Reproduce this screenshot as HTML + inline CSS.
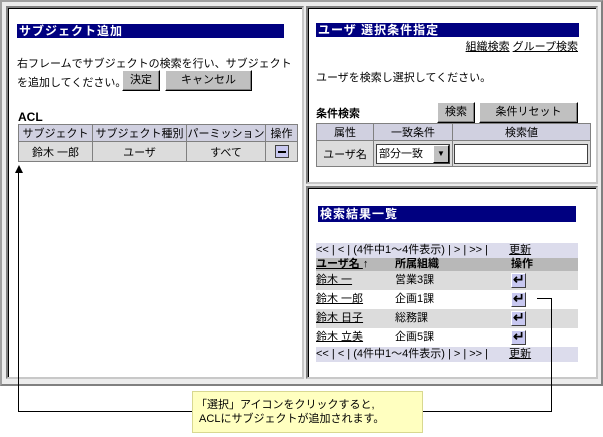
<!DOCTYPE html><html><head><meta charset="utf-8"><style>
*{margin:0;padding:0;box-sizing:border-box}
body{width:603px;height:437px;background:#fff;position:relative;overflow:hidden;font-family:"Liberation Sans","Noto Sans CJK JP",sans-serif;font-size:11px;color:#000}
.a{position:absolute;white-space:nowrap}
.outer{position:absolute;left:0;top:0;width:603px;height:386px;background:#ececec;border:2px solid #a0a0a0;border-right-color:#808080;border-bottom-color:#808080}
.fr{position:absolute;background:#fff;border-left:2px solid #808080;border-top:2px solid #808080;border-right:2px solid #c8c8c8;border-bottom:2px solid #c8c8c8;box-shadow:inset 1px 1px 0 #000}
.bar{position:absolute;background:#000080;color:#fff;font-weight:bold;font-size:12px;line-height:14px;padding-left:2px;letter-spacing:1px}
.btn{position:absolute;background:#c0c0c0;border:1px solid;border-color:#fff #000 #000 #fff;box-shadow:inset -1px -1px 0 #808080;text-align:center;font-size:11px;line-height:18px}
table{position:absolute;border-collapse:collapse}
td{border:1px solid #808080;text-align:center;font-size:11px;padding:0;white-space:nowrap}
.h td{background:#d0d0e0}
.r td{background:#dcdcdc}
.ic{position:absolute;width:15px;height:15px;background:#c8c8f0;border:1px solid;border-color:#fff #404040 #404040 #fff}
.ic:after{content:"↵";position:absolute;left:1px;top:-3px;font-weight:bold;font-size:14px}
u{text-decoration:underline}
.ln{position:absolute;background:#000}
</style></head><body>
<div class="outer"></div>
<div class="fr" style="left:6px;top:6px;width:298px;height:373px"></div>
<div class="fr" style="left:306px;top:6px;width:292px;height:178px"></div>
<div class="fr" style="left:306px;top:186px;width:292px;height:193px"></div>

<div class="bar" style="left:17px;top:24px;width:267px;height:14px">サブジェクト追加</div>
<div class="a" style="left:17px;top:55px">右フレームでサブジェクトの検索を行い、サブジェクト</div>
<div class="a" style="left:17px;top:74px">を追加してください。</div>
<div class="btn" style="left:122px;top:70px;width:38px;height:21px">決定</div>
<div class="btn" style="left:165px;top:70px;width:87px;height:21px">キャンセル</div>
<div class="a" style="left:18px;top:110px;font-weight:bold;font-size:12px">ACL</div>
<table style="left:18px;top:124px;width:280px">
<tr class="h" style="height:16px"><td style="width:74px">サブジェクト</td><td style="width:94px">サブジェクト種別</td><td style="width:79px">パーミッション</td><td>操作</td></tr>
<tr class="r" style="height:20px"><td>鈴木 一郎</td><td>ユーザ</td><td>すべて</td><td><span style="display:inline-block;width:14px;height:13px;background:#c8c8f0;border:1px solid #404040;vertical-align:middle;position:relative"><span style="position:absolute;left:2px;top:5px;width:8px;height:2px;background:#000"></span></span></td></tr>
</table>

<div class="bar" style="left:316px;top:23px;width:263px;height:14px">ユーザ 選択条件指定</div>
<div class="a" style="right:25px;top:38px"><u>組織検索</u> <u>グループ検索</u></div>
<div class="a" style="left:316px;top:69px">ユーザを検索し選択してください。</div>
<div class="a" style="left:316px;top:105px;font-weight:bold">条件検索</div>
<div class="btn" style="left:437px;top:102px;width:38px;height:21px">検索</div>
<div class="btn" style="left:479px;top:102px;width:99px;height:21px">条件リセット</div>
<table style="left:316px;top:123px;width:275px">
<tr class="h" style="height:16px"><td style="width:57px">属性</td><td style="width:79px">一致条件</td><td>検索値</td></tr>
<tr class="r" style="height:26px"><td>ユーザ名</td><td style="text-align:left;padding-left:2px"><span style="display:inline-block;width:74px;height:20px;background:#fff;border:1px solid #404040;position:relative;text-align:left;padding-left:2px;line-height:18px">部分一致<span style="position:absolute;right:0;top:0;width:16px;height:18px;background:#c0c0c0;border:1px solid;border-color:#fff #000 #000 #fff;font-size:8px;text-align:center;line-height:16px">▼</span></span></td><td style="text-align:left;padding-left:1px"><span style="display:inline-block;width:134px;height:20px;background:#fff;border:1px solid #404040;vertical-align:middle"></span></td></tr>
</table>

<div class="bar" style="left:318px;top:206px;width:258px;height:16px;line-height:16px">検索結果一覧</div>
<div class="a" style="left:316px;top:243px;width:262px;height:15px;background:#dcdcec;line-height:15px">&lt;&lt; | &lt; | (4件中1～4件表示) | &gt; | &gt;&gt; | <u style="margin-left:18px">更新</u></div>
<div class="a" style="left:316px;top:258px;width:262px;height:13px;background:#b8b8b8;line-height:12px;font-weight:bold"><u>ユーザ名 </u>↑<span style="position:absolute;left:79px">所属組織</span><span style="position:absolute;left:195px">操作</span></div>
<div class="a" style="left:316px;top:271px;width:262px;height:19px;background:#dcdcdc;line-height:19px"><u>鈴木 一</u><span style="position:absolute;left:79px">営業3課</span></div>
<div class="a" style="left:316px;top:290px;width:262px;height:19px;line-height:19px"><u>鈴木 一郎</u><span style="position:absolute;left:79px">企画1課</span></div>
<div class="a" style="left:316px;top:309px;width:262px;height:19px;background:#dcdcdc;line-height:19px"><u>鈴木 日子</u><span style="position:absolute;left:79px">総務課</span></div>
<div class="a" style="left:316px;top:328px;width:262px;height:19px;line-height:19px"><u>鈴木 立美</u><span style="position:absolute;left:79px">企画5課</span></div>
<div class="ic" style="left:511px;top:273px"></div>
<div class="ic" style="left:511px;top:292px"></div>
<div class="ic" style="left:511px;top:311px"></div>
<div class="ic" style="left:511px;top:330px"></div>
<div class="a" style="left:316px;top:347px;width:262px;height:15px;background:#dcdcec;line-height:15px">&lt;&lt; | &lt; | (4件中1～4件表示) | &gt; | &gt;&gt; | <u style="margin-left:18px">更新</u></div>

<div class="ln" style="left:18px;top:170px;width:1px;height:242px"></div>
<div class="a" style="left:15px;top:165px;width:0;height:0;border-left:4px solid transparent;border-right:4px solid transparent;border-bottom:8px solid #000"></div>
<div class="ln" style="left:18px;top:411px;width:534px;height:1px"></div>
<div class="ln" style="left:551px;top:298px;width:1px;height:114px"></div>
<div class="ln" style="left:537px;top:298px;width:15px;height:1px"></div>
<div class="a" style="left:192px;top:391px;width:231px;height:42px;background:#ffffc0;border:1px solid #d8d890;font-size:11px;line-height:14px;padding:6px 0 0 3px">「選択」アイコンをクリックすると,<br>&nbsp;ACLにサブジェクトが追加されます。</div>
</body></html>
